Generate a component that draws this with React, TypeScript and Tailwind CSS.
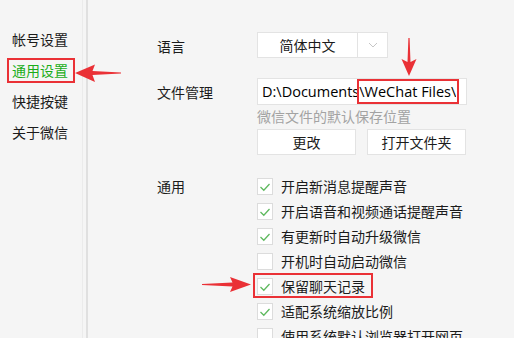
import React from "react";

const RED = "#ea3136";

function Check({ checked }: { checked: boolean }) {
  return (
    <div className="w-[16px] h-[17px] bg-white border border-[#dcdcdc] flex items-center justify-center shrink-0">
      {checked && (
        <svg width="14" height="14" viewBox="0 0 14 14">
          <path d="M2.5 7 L5.8 10.2 L11.5 4" fill="none" stroke="#5fb95f" strokeWidth="1.3" />
        </svg>
      )}
    </div>
  );
}

const items: [string, boolean][] = [
  ["开启新消息提醒声音", true],
  ["开启语音和视频通话提醒声音", true],
  ["有更新时自动升级微信", true],
  ["开机时自动启动微信", false],
  ["保留聊天记录", true],
  ["适配系统缩放比例", true],
  ["使用系统默认浏览器打开网页", false],
];

export default function App() {
  return (
    <div className="relative w-[514px] h-[338px] overflow-hidden bg-[#f5f5f5] flex text-[14px] text-[#1b1b1b] font-['Open_Sans','Noto_Sans_CJK_SC',sans-serif]">
      {/* sidebar */}
      <div className="w-[83px] shrink-0 border-r border-[#ebebeb] pt-[24px]">
        <div className="h-[31px] flex items-center pl-[12px]">帐号设置</div>
        <div className="h-[31px] flex items-center">
          <div className="ml-[7px] w-[68px] h-[25px] border-2 border-[#ea3136] pl-[3px] flex items-center text-[#1aad19]">
            通用设置
          </div>
        </div>
        <div className="h-[31px] flex items-center pl-[12px]">快捷按键</div>
        <div className="h-[31px] flex items-center pl-[12px]">关于微信</div>
      </div>
      <div className="w-[3px] shrink-0" />
      <div className="w-[2px] shrink-0 bg-[#e0e0e0]" />

      {/* content */}
      <div className="flex-1 pl-[69px] pt-[32px]">
        <div className="flex items-center">
          <div className="w-[100px] pt-[3px]">语言</div>
          <div className="w-[131px] h-[26px] bg-white border border-[#e3e3e3] flex">
            <div className="w-[100px] flex items-center justify-center border-r border-[#e3e3e3]">简体中文</div>
            <div className="flex-1 flex items-center justify-center">
              <svg width="10" height="6" viewBox="0 0 10 6">
                <path d="M1 1 L5 5 L9 1" fill="none" stroke="#c6c6c6" strokeWidth="1" />
              </svg>
            </div>
          </div>
        </div>

        <div className="flex items-start mt-[20px]">
          <div className="w-[100px] h-[27px] flex items-center pt-[2px]">文件管理</div>
          <div className="flex flex-col">
            <div className="relative w-[210px] h-[27px] bg-white border border-[#e3e3e3] pl-[4px] pr-[6px] flex items-center">
              <div className="overflow-hidden whitespace-nowrap text-[14.5px] text-black">
                D:\Documents\WeChat Files\
              </div>
              <div className="absolute left-[99px] top-0 w-[102px] h-[25px] border-2 border-[#ea3136]" />
            </div>
            <div className="h-[20px] mt-[1px] flex items-center text-[#a3a3a3]">微信文件的默认保存位置</div>
            <div className="flex gap-[11px] mt-[3px]">
              <div className="w-[99px] h-[26px] bg-white border border-[#e3e3e3] flex items-center justify-center">更改</div>
              <div className="w-[99px] h-[26px] bg-white border border-[#e3e3e3] flex items-center justify-center">打开文件夹</div>
            </div>
          </div>
        </div>

        <div className="flex items-start mt-[19px]">
          <div className="w-[100px] h-[25px] flex items-center">通用</div>
          <div className="flex flex-col">
            {items.map(([t, c], i) => (
              <div key={i} className="relative h-[25px] flex items-center gap-[8px] whitespace-nowrap">
                <Check checked={c} />
                <span>{t}</span>
                {i === 4 && (
                  <div className="absolute left-[-4px] top-[-1px] w-[120px] h-[25px] border-2 border-[#ea3136]" />
                )}
              </div>
            ))}
          </div>
        </div>
      </div>

      {/* annotation arrows */}
      <svg className="absolute left-0 top-0 pointer-events-none" width="514" height="338" viewBox="0 0 514 338">
        <polygon points="75,73 95,64.5 92.5,71 121,72.6 121,73.4 92.5,75 95,82" fill={RED} />
        <polygon points="409,76 401.5,59 407.5,62 408.4,38 409.6,38 410.5,62 416.5,59" fill={RED} />
        <polygon points="251,284.5 230,277 232.5,282.5 202,284 202,285 232.5,286.5 230,292" fill={RED} />
      </svg>
    </div>
  );
}
